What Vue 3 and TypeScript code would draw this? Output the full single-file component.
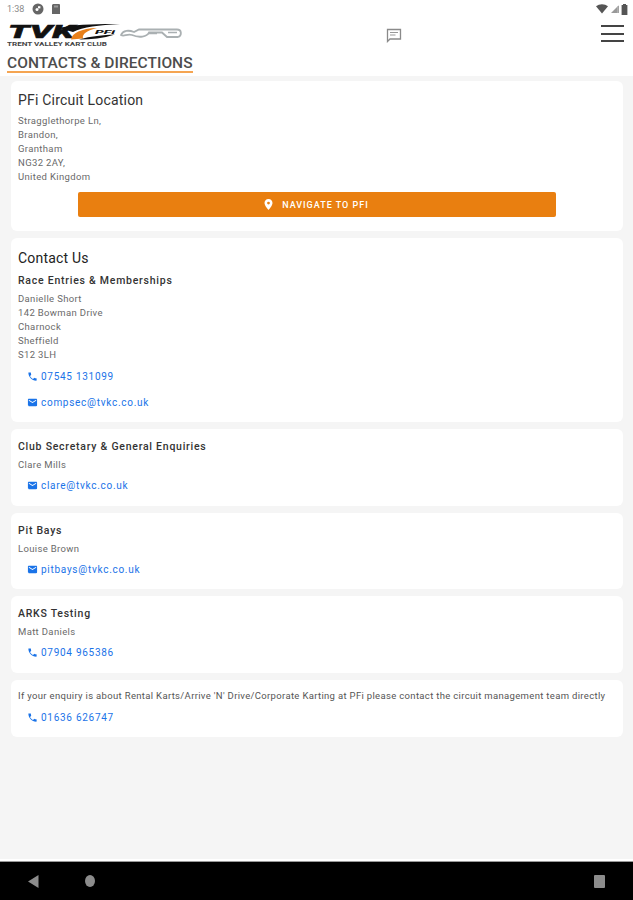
<script setup lang="ts">
interface Link { kind: 'phone' | 'mail'; text: string }
interface Block { title?: string; heading?: string; lines: string[]; links: Link[]; cls: string; plain?: boolean }
const blocks: Block[] = [
  { heading: 'Contact Us', title: 'Race Entries & Memberships', lines: ['Danielle Short', '142 Bowman Drive', 'Charnock', 'Sheffield', 'S12 3LH'], links: [{ kind: 'phone', text: '07545 131099' }, { kind: 'mail', text: 'compsec@tvkc.co.uk' }], cls: 'c-race' },
  { title: 'Club Secretary & General Enquiries', lines: ['Clare Mills'], links: [{ kind: 'mail', text: 'clare@tvkc.co.uk' }], cls: 'c-small' },
  { title: 'Pit Bays', lines: ['Louise Brown'], links: [{ kind: 'mail', text: 'pitbays@tvkc.co.uk' }], cls: 'c-small' },
  { title: 'ARKS Testing', lines: ['Matt Daniels'], links: [{ kind: 'phone', text: '07904 965386' }], cls: 'c-small' },
  { lines: ["If your enquiry is about Rental Karts/Arrive 'N' Drive/Corporate Karting at PFi please contact the circuit management team directly"], links: [{ kind: 'phone', text: '01636 626747' }], cls: 'c-note', plain: true }
]
const address = ['Stragglethorpe Ln,', 'Brandon,', 'Grantham', 'NG32 2AY,', 'United Kingdom']
</script>

<template>
  <div class="screen">
    <div class="status">
      <div class="status-left">
        <span class="time">1:38</span>
        <svg width="12" height="12" viewBox="0 0 12 12"><circle cx="6" cy="6" r="5.500" fill="#666" /><path d="M6 3.200h2.400v2.200H6z" fill="#fff" /><circle cx="5" cy="6.600" r="1.500" fill="#fff" /></svg>
        <svg class="sd" width="10" height="12" viewBox="0 0 10 12"><path d="M2 1h6a1 1 0 0 1 1 1v9H1V2z" fill="#666" /><path d="M3 2.500h4v2H3z" fill="#999" /></svg>
      </div>
      <div class="status-right">
        <svg width="12" height="10" viewBox="0 0 12 10"><path d="M0 2.200C3.400-.5 8.600-.5 12 2.200L6 9.500z" fill="#555" /></svg>
        <svg width="9" height="10" viewBox="0 0 9 10"><path d="M9 1v8H1z" fill="#999" /><path d="M7.600 1.500H9V9H7.600z" fill="#fff" /><path d="M7.800 2H8.600V9H7.800z" fill="#666" /></svg>
        <svg width="7" height="11" viewBox="0 0 7 11"><path d="M2 0h3v1h1.400v10H.6V1H2z" fill="#555" /></svg>
      </div>
    </div>

    <header class="topbar">
      <div class="brand">
        <svg class="logo" width="178" height="28" viewBox="0 -3 178 28">
          <text class="logo-tvk" x="1" y="14.500" textLength="66" lengthAdjust="spacingAndGlyphs">TVK</text>
          <path d="M52 5C66 1.500 90 .8 113 1 92 2 76 4 66 9z" fill="#111" />
          <path d="M64 16.500C65 10 74 5.500 90 5 80 7.500 75 11 76 15.500z" fill="#e8801a" />
          <path d="M72 16.500C84 16.500 96 15.500 108 11.500 96 12 84 13 72 16.500z" fill="#111" />
          <text class="logo-pfi" x="88" y="11" textLength="20" lengthAdjust="spacingAndGlyphs">PFi</text>
          <text class="logo-club" x="0" y="23" textLength="100" lengthAdjust="spacingAndGlyphs">TRENT VALLEY KART CLUB</text>
          <path d="M114 12C116 7 122 7 127 9L132 6.500H170C175 6.500 175 13 171 14H160L155 9.500H142C140 14 132 15 125 12 120 10.500 117 14 114 12z" fill="none" stroke="#aab0b2" stroke-width="1.800" />
          <path d="M141 10.500H150M161 9.500H170" fill="none" stroke="#aab0b2" stroke-width="1.500" />
        </svg>
        <h1 class="page-title">CONTACTS &amp; DIRECTIONS</h1>
      </div>
      <svg class="chat" width="16" height="15" viewBox="0 0 16 15"><path d="M1.500 1.500h13v9.500H4L1.500 13.500z" fill="none" stroke="#8a8a8a" stroke-width="1.300" /><path d="M4 4.500h8M4 7h5.500" stroke="#999" stroke-width="1" /></svg>
      <div class="menu"><i></i><i></i><i></i></div>
    </header>

    <main class="content">
      <section class="card c-loc">
        <h2>PFi Circuit Location</h2>
        <p v-for="l in address" :key="l" class="line">{{ l }}</p>
        <div class="btn-wrap">
          <button class="nav-btn">
            <svg width="9" height="11" viewBox="0 0 9 11"><path fill-rule="evenodd" d="M4.500 0C2 0 .5 1.800.5 4c0 2.800 4 7 4 7s4-4.200 4-7c0-2.200-1.500-4-4-4zm0 2.700a1.400 1.400 0 1 1 0 2.800 1.400 1.400 0 0 1 0-2.800z" fill="#fff" /></svg>
            <span>NAVIGATE TO PFI</span>
          </button>
        </div>
      </section>

      <section v-for="b in blocks" :key="b.cls + b.lines[0]" class="card" :class="b.cls">
        <h2 v-if="b.heading">{{ b.heading }}</h2>
        <h3 v-if="b.title">{{ b.title }}</h3>
        <p v-for="l in b.lines" :key="l" class="line" :class="{ note: b.plain }">{{ l }}</p>
        <a v-for="k in b.links" :key="k.text" class="link">
          <svg v-if="k.kind === 'phone'" width="11" height="11" viewBox="0 0 24 24"><path d="M6.600 10.800c1.400 2.800 3.800 5.100 6.600 6.600l2.200-2.200c.3-.3.700-.4 1-.2 1.100.4 2.300.6 3.600.6.600 0 1 .4 1 1V20c0 .6-.4 1-1 1C10.600 21 3 13.400 3 4c0-.6.400-1 1-1h3.500c.6 0 1 .4 1 1 0 1.300.2 2.500.6 3.600.1.300 0 .7-.2 1z" fill="#1a73e8" /></svg>
          <svg v-else width="11" height="11" viewBox="0 0 24 24"><path d="M20 4H4C2.900 4 2 4.900 2 6v12c0 1.100.9 2 2 2h16c1.100 0 2-.9 2-2V6c0-1.100-.9-2-2-2zm0 4l-8 5-8-5V6l8 5 8-5z" fill="#1a73e8" /></svg>
          <span>{{ k.text }}</span>
        </a>
      </section>
    </main>

    <nav class="navbar">
      <svg width="11" height="13" viewBox="0 0 11 13"><path d="M10.500 0v13L0 6.500z" fill="#8c8c8c" /></svg>
      <span class="dot"></span>
      <span class="square"></span>
    </nav>
  </div>
</template>

<style scoped>
.screen {
  width: 633px;
  height: 900px;
  display: flex;
  flex-direction: column;
  background: #f5f5f5;
  font-family: Roboto, "Liberation Sans", sans-serif;
  overflow: hidden;
}
.status {
  height: 20px;
  flex: none;
  background: #fff;
  display: flex;
  justify-content: space-between;
  align-items: center;
  padding: 0 5px 2px 7px;
  box-sizing: border-box;
}
.status-left, .status-right { display: flex; align-items: center; gap: 5px; }
.status-right { gap: 2px; }
.sd { margin-left: 2px; }
.time { font-size: 9px; color: #8a8a8a; margin-right: 3px; }
.topbar {
  height: 56px;
  flex: none;
  background: #fff;
  display: flex;
  align-items: flex-start;
  padding: 0 9px 0 7px;
  box-sizing: border-box;
}
.brand { width: 379px; flex: none; }
.logo { display: block; }
.logo-tvk { font: italic 900 18.500px Roboto, sans-serif; fill: #111; stroke: #111; stroke-width: .5px; }
.logo-pfi { font: italic 900 6px Roboto, sans-serif; fill: #111; }
.logo-club { font: 700 4.500px Roboto, sans-serif; fill: #444; }
.page-title {
  margin: 7px 0 0;
  display: inline-block;
  font-size: 15.500px;
  line-height: 16px;
  font-weight: 500;
  letter-spacing: .05px;
  color: #4d4d4d;
  border-bottom: 2.500px solid #f5a552;
}
.chat { margin-top: 8px; }
.menu {
  margin-left: auto;
  margin-top: 5px;
  width: 23px;
  display: flex;
  flex-direction: column;
  gap: 5.500px;
}
.menu i { display: block; height: 2px; background: #444; }
.content {
  flex: 1;
  display: flex;
  flex-direction: column;
  gap: 7px;
  padding: 5px 10px 0 11px;
}
.card {
  background: #fff;
  border-radius: 6px;
  padding: 0 7px;
  box-sizing: border-box;
}
.c-loc { height: 150px; padding-top: 11px; }
.c-race { height: 184px; padding-top: 12px; }
.c-small { height: 76.500px; padding-top: 11px; }
.c-note { height: 57px; padding-top: 9.500px; }
h2 {
  margin: 0 0 5px;
  font-size: 14px;
  line-height: 17px;
  font-weight: 400;
  color: #333;
  letter-spacing: .2px;
}
.c-race h2 { margin-bottom: 7px; color: #222; }
h3 {
  margin: 0 0 4px;
  font-size: 10.500px;
  line-height: 14px;
  font-weight: 500;
  letter-spacing: .75px;
  color: #333;
}
.line {
  margin: 0;
  font-size: 9.500px;
  line-height: 14.100px;
  letter-spacing: .35px;
  color: #6a6a6a;
}
.note { color: #555; line-height: 14px; white-space: nowrap; letter-spacing: .33px; }
.link {
  display: flex;
  align-items: center;
  gap: 3px;
  height: 26px;
  padding-left: 9px;
  font-size: 10px;
  letter-spacing: .72px;
  color: #1a73e8;
}
.c-small .link { margin-top: 1.500px; height: 24px; }
.c-note .link { margin-top: 2.500px; height: 24px; }
.c-race .link:first-of-type { margin-top: 1px; }
.btn-wrap { display: flex; justify-content: center; margin-top: 8px; padding-right: 1px; }
.nav-btn {
  width: 478px;
  height: 25px;
  border: 0;
  border-radius: 2px;
  background: #e97f10;
  color: #fff;
  font: 500 9px Roboto, sans-serif;
  letter-spacing: 1px;
  display: flex;
  align-items: center;
  justify-content: center;
  gap: 9px;
  padding: 0;
}
.navbar {
  height: 38px;
  flex: none;
  background: #000;
  box-shadow: 0 -1px 0 #999, 0 -3px 0 #fff;
  display: flex;
  align-items: center;
  padding-left: 28px;
  box-sizing: border-box;
}
.dot { width: 10px; height: 12px; border-radius: 50%; background: #8c8c8c; margin-left: 46px; }
.square { width: 11px; height: 13px; border-radius: 1px; background: #8c8c8c; margin-left: auto; margin-right: 28px; }
</style>
